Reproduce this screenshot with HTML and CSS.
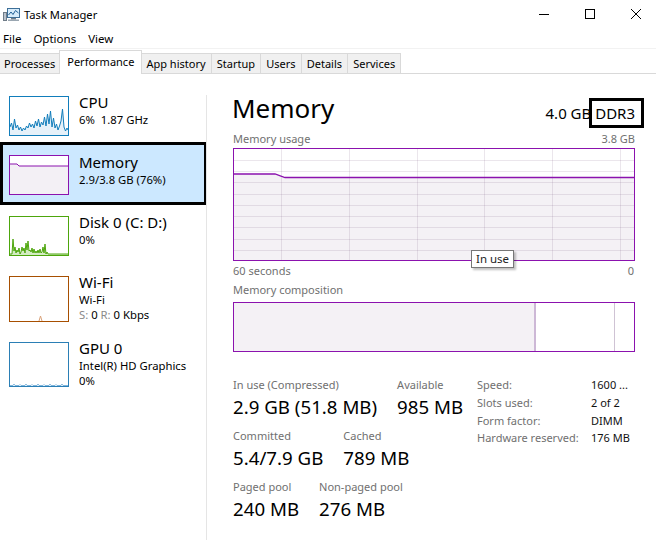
FILE: index.html
```html
<!DOCTYPE html>
<html>
<head>
<meta charset="utf-8">
<title>Task Manager</title>
<link rel="stylesheet" href="styles.css">
</head>
<body>
<div class="win">
  <div class="titlebar">
    <svg class="appicon" width="17" height="15" viewBox="0 0 17 15">
      <rect x="0.5" y="5.5" width="3" height="8" fill="#b9c2cc" stroke="#6f7c88"/>
      <rect x="4.5" y="1.5" width="12" height="9" fill="#d7ecfb" stroke="#3d6f98"/>
      <polyline points="5.5,8 8,5 10,7.5 12.5,3.5 15.5,6" fill="none" stroke="#1f5f95" stroke-width="1"/>
      <rect x="8" y="11" width="5" height="1.5" fill="#6f7c88"/>
      <rect x="5" y="12.5" width="11" height="1.5" fill="#9aa6b1"/>
    </svg>
    <span class="apptitle">Task Manager</span>
    <div class="controls">
      <div class="ctl"><svg width="12" height="12" viewBox="0 0 12 12"><line x1="1" y1="6.5" x2="11" y2="6.5" stroke="#000" stroke-width="1"/></svg></div>
      <div class="ctl"><svg width="12" height="12" viewBox="0 0 12 12"><rect x="1.5" y="1.5" width="9" height="9" fill="none" stroke="#000" stroke-width="1"/></svg></div>
      <div class="ctl"><svg width="12" height="12" viewBox="0 0 12 12"><path d="M1 1 L11 11 M11 1 L1 11" stroke="#000" stroke-width="1" fill="none"/></svg></div>
    </div>
  </div>

  <div class="menubar">
    <span>File</span><span>Options</span><span>View</span>
  </div>

  <div class="tabs">
    <div class="tab first">Processes</div>
    <div class="tab active">Performance</div>
    <div class="tab">App history</div>
    <div class="tab">Startup</div>
    <div class="tab">Users</div>
    <div class="tab">Details</div>
    <div class="tab">Services</div>
  </div>

  <div class="content">
    <div class="side">
      <div class="item item-cpu">
        <div class="thumb th-cpu">
          <svg width="58" height="38" viewBox="0 0 58 38" preserveAspectRatio="none">
            <polygon fill="#e6f1f9" points="0,30 1.5,26 3,33 4.5,22 6,31 7.5,28 9,33 10.5,30 12,34 13.5,31 15,33 16.5,29 18,31 19.5,26 21,30 22.5,27 24,31 25.5,24 27,29 28.5,22 30,30 31.5,25 33,28 34.5,20 36,29 37.5,17 39,27 40.5,14 42,30 43.5,21 45,31 46.5,27 48,33 49.5,29 51,24 52.5,12 54,30 55.5,34 57,31 58,33 58,38 0,38"/>
            <polyline fill="none" stroke="#117dbb" stroke-width="1" points="0,30 1.5,26 3,33 4.5,22 6,31 7.5,28 9,33 10.5,30 12,34 13.5,31 15,33 16.5,29 18,31 19.5,26 21,30 22.5,27 24,31 25.5,24 27,29 28.5,22 30,30 31.5,25 33,28 34.5,20 36,29 37.5,17 39,27 40.5,14 42,30 43.5,21 45,31 46.5,27 48,33 49.5,29 51,24 52.5,12 54,30 55.5,34 57,31 58,33"/>
          </svg>
        </div>
        <div class="info">
          <div class="name">CPU</div>
          <div class="sub">6%<span class="gap">1.87 GHz</span></div>
        </div>
      </div>

      <div class="item item-mem selected">
        <div class="thumb th-mem">
          <svg width="58" height="38" viewBox="0 0 58 38" preserveAspectRatio="none">
            <rect x="0" y="0" width="58" height="38" fill="#ffffff"/>
            <polygon fill="#f3f0f5" points="0,8 7,8 9,10 58,10 58,38 0,38"/>
            <polyline fill="none" stroke="#8b12ae" stroke-width="1" points="0,8 7,8 9,10 58,10"/>
          </svg>
        </div>
        <div class="info">
          <div class="name">Memory</div>
          <div class="sub">2.9/3.8 GB (76%)</div>
        </div>
      </div>

      <div class="item">
        <div class="thumb th-disk">
          <svg width="58" height="38" viewBox="0 0 58 38" preserveAspectRatio="none">
            <polygon fill="#d3ebc2" points="0,37 2,37 3,22 4,34 5,30 6,36 7,33 8,35 9,31 10,37 11,35 12,30 13,34 14,31 15,36 16,26 17,33 18,24 19,34 20,33 21,35 22,31 23,36 24,32 25,36 26,34 27,36 28,33 29,36 30,32 31,36 32,35 33,30 34,36 35,27 36,37 37,35 38,37 58,37 58,38 0,38"/>
            <polyline fill="none" stroke="#4da60c" stroke-width="1" points="0,37 2,37 3,22 4,34 5,30 6,36 7,33 8,35 9,31 10,37 11,35 12,30 13,34 14,31 15,36 16,26 17,33 18,24 19,34 20,33 21,35 22,31 23,36 24,32 25,36 26,34 27,36 28,33 29,36 30,32 31,36 32,35 33,30 34,36 35,27 36,37 37,35 38,37 58,37"/>
          </svg>
        </div>
        <div class="info">
          <div class="name">Disk 0 (C: D:)</div>
          <div class="sub">0%</div>
        </div>
      </div>

      <div class="item">
        <div class="thumb th-wifi">
          <svg width="58" height="44" viewBox="0 0 58 44" preserveAspectRatio="none">
            <polyline fill="none" stroke="#d9a27a" stroke-width="1" points="29,44 30.5,39 32,44"/>
          </svg>
        </div>
        <div class="info">
          <div class="name">Wi-Fi</div>
          <div class="sub">Wi-Fi</div>
          <div class="sub"><span class="dim">S:</span> 0 <span class="dim">R:</span> 0 Kbps</div>
        </div>
      </div>

      <div class="item">
        <div class="thumb th-gpu">
          <svg width="58" height="43" viewBox="0 0 58 43" preserveAspectRatio="none">
            <polyline fill="none" stroke="#7fb5dc" stroke-width="1" points="0,42.5 3,42.5 4,41 5,42.5 9,42.5 10,41.5 11,42.5 15,42.5 16,41 17,42.5 21,42.5 22,41.5 23,42.5 27,42.5 28,41 29,42.5 33,42.5 34,41.5 35,42.5 39,42.5 40,41 41,42.5 45,42.5 46,41.5 47,42.5 51,42.5 52,41 53,42.5 58,42.5"/>
          </svg>
        </div>
        <div class="info">
          <div class="name">GPU 0</div>
          <div class="sub">Intel(R) HD Graphics</div>
          <div class="sub">0%</div>
        </div>
      </div>
    </div>

    <div class="divider"></div>

    <div class="main">
      <div class="head">
        <div class="heading">Memory</div>
        <div class="spec">4.0 GB <span class="ddr">DDR3</span></div>
      </div>

      <div class="cap cap-usage"><span>Memory usage</span><span>3.8 GB</span></div>

      <div class="graph">
        <svg width="400" height="111" viewBox="0 0 400 111" preserveAspectRatio="none">
          <polygon fill="#f4f1f5" points="0,25 41,25 51,28.5 400,28.5 400,111 0,111"/>
          <g stroke="rgba(120,90,130,0.15)" stroke-width="1">
            <line x1="0" y1="11.5" x2="400" y2="11.5"/>
            <line x1="0" y1="22.5" x2="400" y2="22.5"/>
            <line x1="0" y1="33.5" x2="400" y2="33.5"/>
            <line x1="0" y1="45.5" x2="400" y2="45.5"/>
            <line x1="0" y1="56.5" x2="400" y2="56.5"/>
            <line x1="0" y1="67.5" x2="400" y2="67.5"/>
            <line x1="0" y1="78.5" x2="400" y2="78.5"/>
            <line x1="0" y1="90.5" x2="400" y2="90.5"/>
            <line x1="0" y1="101.5" x2="400" y2="101.5"/>
            <line x1="47.5" y1="0" x2="47.5" y2="111"/>
            <line x1="115.5" y1="0" x2="115.5" y2="111"/>
            <line x1="183.5" y1="0" x2="183.5" y2="111"/>
            <line x1="250.5" y1="0" x2="250.5" y2="111"/>
            <line x1="318.5" y1="0" x2="318.5" y2="111"/>
            <line x1="386.5" y1="0" x2="386.5" y2="111"/>
          </g>
          <polyline fill="none" stroke="#8b12ae" stroke-width="1.3" points="0,25 41,25 51,28.5 400,28.5"/>
        </svg>
        <div class="tip">In use</div>
      </div>

      <div class="cap cap-time"><span>60 seconds</span><span>0</span></div>

      <div class="cap cap-comp"><span>Memory composition</span></div>

      <div class="comp">
        <div class="c-used"></div>
        <div class="c-mod"></div>
        <div class="c-free"></div>
      </div>

      <div class="stats">
        <div class="statcols">
          <div class="srow">
            <div class="stat"><div class="slabel">In use (Compressed)</div><div class="sval">2.9 GB (51.8 MB)</div></div>
            <div class="stat"><div class="slabel">Available</div><div class="sval">985 MB</div></div>
          </div>
          <div class="srow">
            <div class="stat"><div class="slabel">Committed</div><div class="sval">5.4/7.9 GB</div></div>
            <div class="stat"><div class="slabel">Cached</div><div class="sval">789 MB</div></div>
          </div>
          <div class="srow">
            <div class="stat"><div class="slabel">Paged pool</div><div class="sval">240 MB</div></div>
            <div class="stat"><div class="slabel">Non-paged pool</div><div class="sval">276 MB</div></div>
          </div>
        </div>
        <div class="hw">
          <span class="hk">Speed:</span><span class="hv">1600 ...</span>
          <span class="hk">Slots used:</span><span class="hv">2 of 2</span>
          <span class="hk">Form factor:</span><span class="hv">DIMM</span>
          <span class="hk">Hardware reserved:</span><span class="hv">176 MB</span>
        </div>
      </div>
    </div>
  </div>
</div>
</body>
</html>
```

FILE: styles.css
```css
html, body {
  margin: 0;
  padding: 0;
  background: #ffffff;
}
body {
  width: 656px;
  height: 540px;
  overflow: hidden;
  font-family: "Noto Sans", "Open Sans", sans-serif;
  color: #000;
}
.win {
  width: 656px;
  height: 540px;
  display: flex;
  flex-direction: column;
}

/* title bar */
.titlebar {
  height: 28px;
  display: flex;
  align-items: center;
  padding-left: 3px;
  flex: none;
}
.appicon {
  display: block;
  margin-right: 4px;
  margin-top: 1px;
}
.apptitle {
  font-size: 11.2px;
  color: #000;
}
.controls {
  margin-left: auto;
  margin-right: -3px;
  display: flex;
  height: 28px;
}
.ctl {
  width: 46px;
  height: 28px;
  display: flex;
  align-items: center;
  justify-content: center;
}
.ctl svg {
  display: block;
}

/* menu */
.menubar {
  height: 20px;
  display: flex;
  align-items: center;
  gap: 12px;
  padding-left: 3px;
  font-size: 11.5px;
  flex: none;
}

/* tabs */
.tabs {
  height: 26px;
  box-sizing: border-box;
  border-top: 1px solid #f2f2f2;
  border-bottom: 1px solid #d9d9d9;
  display: flex;
  align-items: flex-end;
  flex: none;
  font-size: 11px;
}
.tab {
  height: 20px;
  box-sizing: border-box;
  line-height: 19px;
  padding: 0 5.1px;
  background: #f0f0f0;
  border: 1px solid #d9d9d9;
  border-bottom: none;
  margin-left: -1px;
  white-space: nowrap;
}
.tab.first {
  margin-left: -2px;
  padding-right: 5px;
}
.tab.active {
  height: 24px;
  line-height: 22px;
  margin-bottom: -1px;
  background: #ffffff;
  padding: 0 7px;
  position: relative;
  z-index: 1;
  margin-left: -2px;
  margin-right: -1px;
}

/* content */
.content {
  flex: 1;
  display: flex;
  min-height: 0;
}
.side {
  width: 206px;
  flex: none;
}
.divider {
  width: 1px;
  background: #e5e5e5;
  margin-top: 21px;
  flex: none;
}
.item {
  display: flex;
  align-items: flex-start;
  padding: 11px 0 9px 9px;
}
.item-cpu {
  padding-top: 22px;
  padding-bottom: 6px;
}
.item.selected {
  background: #cce8ff;
  border: 3px solid #000;
  padding: 10px 0 7px 6px;
  width: 195px;
}
.thumb {
  width: 58px;
  height: 38px;
  border: 1px solid #117dbb;
  background: #fff;
  flex: none;
  overflow: hidden;
}
.thumb svg {
  display: block;
}
.th-mem {
  border-color: #8b12ae;
}
.th-disk {
  border-color: #4da60c;
}
.th-wifi {
  border-color: #a74f01;
  height: 44px;
}
.th-gpu {
  border-color: #2b7fb5;
  height: 43px;
}
.info {
  margin-left: 10px;
  margin-top: -3px;
  white-space: nowrap;
}
.selected .info {
  margin-top: -2px;
}
.name {
  font-size: 15px;
  line-height: 19px;
}
.sub {
  font-size: 11.3px;
  line-height: 15px;
}
.gap {
  margin-left: 6px;
}
.dim {
  color: #8a8a8a;
}

/* main panel */
.main {
  flex: 1;
  padding: 19px 21px 0 26px;
  min-width: 0;
}
.head {
  display: flex;
  align-items: baseline;
  justify-content: space-between;
  height: 30px;
}
.heading {
  font-size: 26px;
  line-height: 30px;
  margin-left: -1px;
}
.spec {
  font-size: 15px;
  line-height: 20px;
  position: relative;
  top: 1px;
}
.ddr {
  position: relative;
}
.ddr::after {
  content: "";
  position: absolute;
  left: -6px;
  right: -9px;
  top: -5px;
  bottom: -5px;
  border: 3px solid #000;
}
.cap {
  display: flex;
  justify-content: space-between;
  font-size: 11px;
  line-height: 14px;
  color: #707070;
}
.cap-usage {
  margin-top: 8.5px;
}
.graph {
  margin-top: 2.5px;
  height: 111px;
  border: 1px solid #8b12ae;
  position: relative;
  background: #fff;
}
.graph svg {
  display: block;
}
.tip {
  position: absolute;
  left: 237px;
  top: 101px;
  height: 16px;
  line-height: 16px;
  padding: 0 4px;
  border: 1px solid #777;
  background: #fff;
  font-size: 11.5px;
  color: #222;
  box-shadow: 2px 2px 2px rgba(0, 0, 0, 0.25);
  white-space: nowrap;
}
.cap-time {
  margin-top: 2.7px;
  padding-right: 1px;
}
.cap-comp {
  margin-top: 5px;
}
.comp {
  margin-top: 5px;
  height: 48px;
  border: 1px solid #8b12ae;
  display: flex;
}
.c-used {
  width: 300px;
  background: #f4f1f5;
  border-right: 2px solid #cdb8d6;
  flex: none;
}
.c-mod {
  width: 78px;
  border-right: 1px solid #cfc3d4;
  flex: none;
}
.c-free {
  flex: 1;
}

/* stats */
.stats {
  margin-top: 26px;
  display: flex;
  align-items: flex-start;
}
.statcols {
  width: 244px;
  flex: none;
  display: flex;
  flex-direction: column;
  gap: 9.5px;
}
.srow {
  display: flex;
  gap: 20px;
}
.slabel {
  font-size: 11px;
  line-height: 14px;
  color: #707070;
  white-space: nowrap;
}
.sval {
  font-size: 18.7px;
  line-height: 24px;
  margin-top: 3.5px;
  white-space: nowrap;
}
.hw {
  margin-top: -2px;
  display: grid;
  grid-template-columns: 114px auto;
  font-size: 11px;
  line-height: 17.9px;
  white-space: nowrap;
}
.hk {
  color: #707070;
}
.hv {
  color: #111;
}
```
